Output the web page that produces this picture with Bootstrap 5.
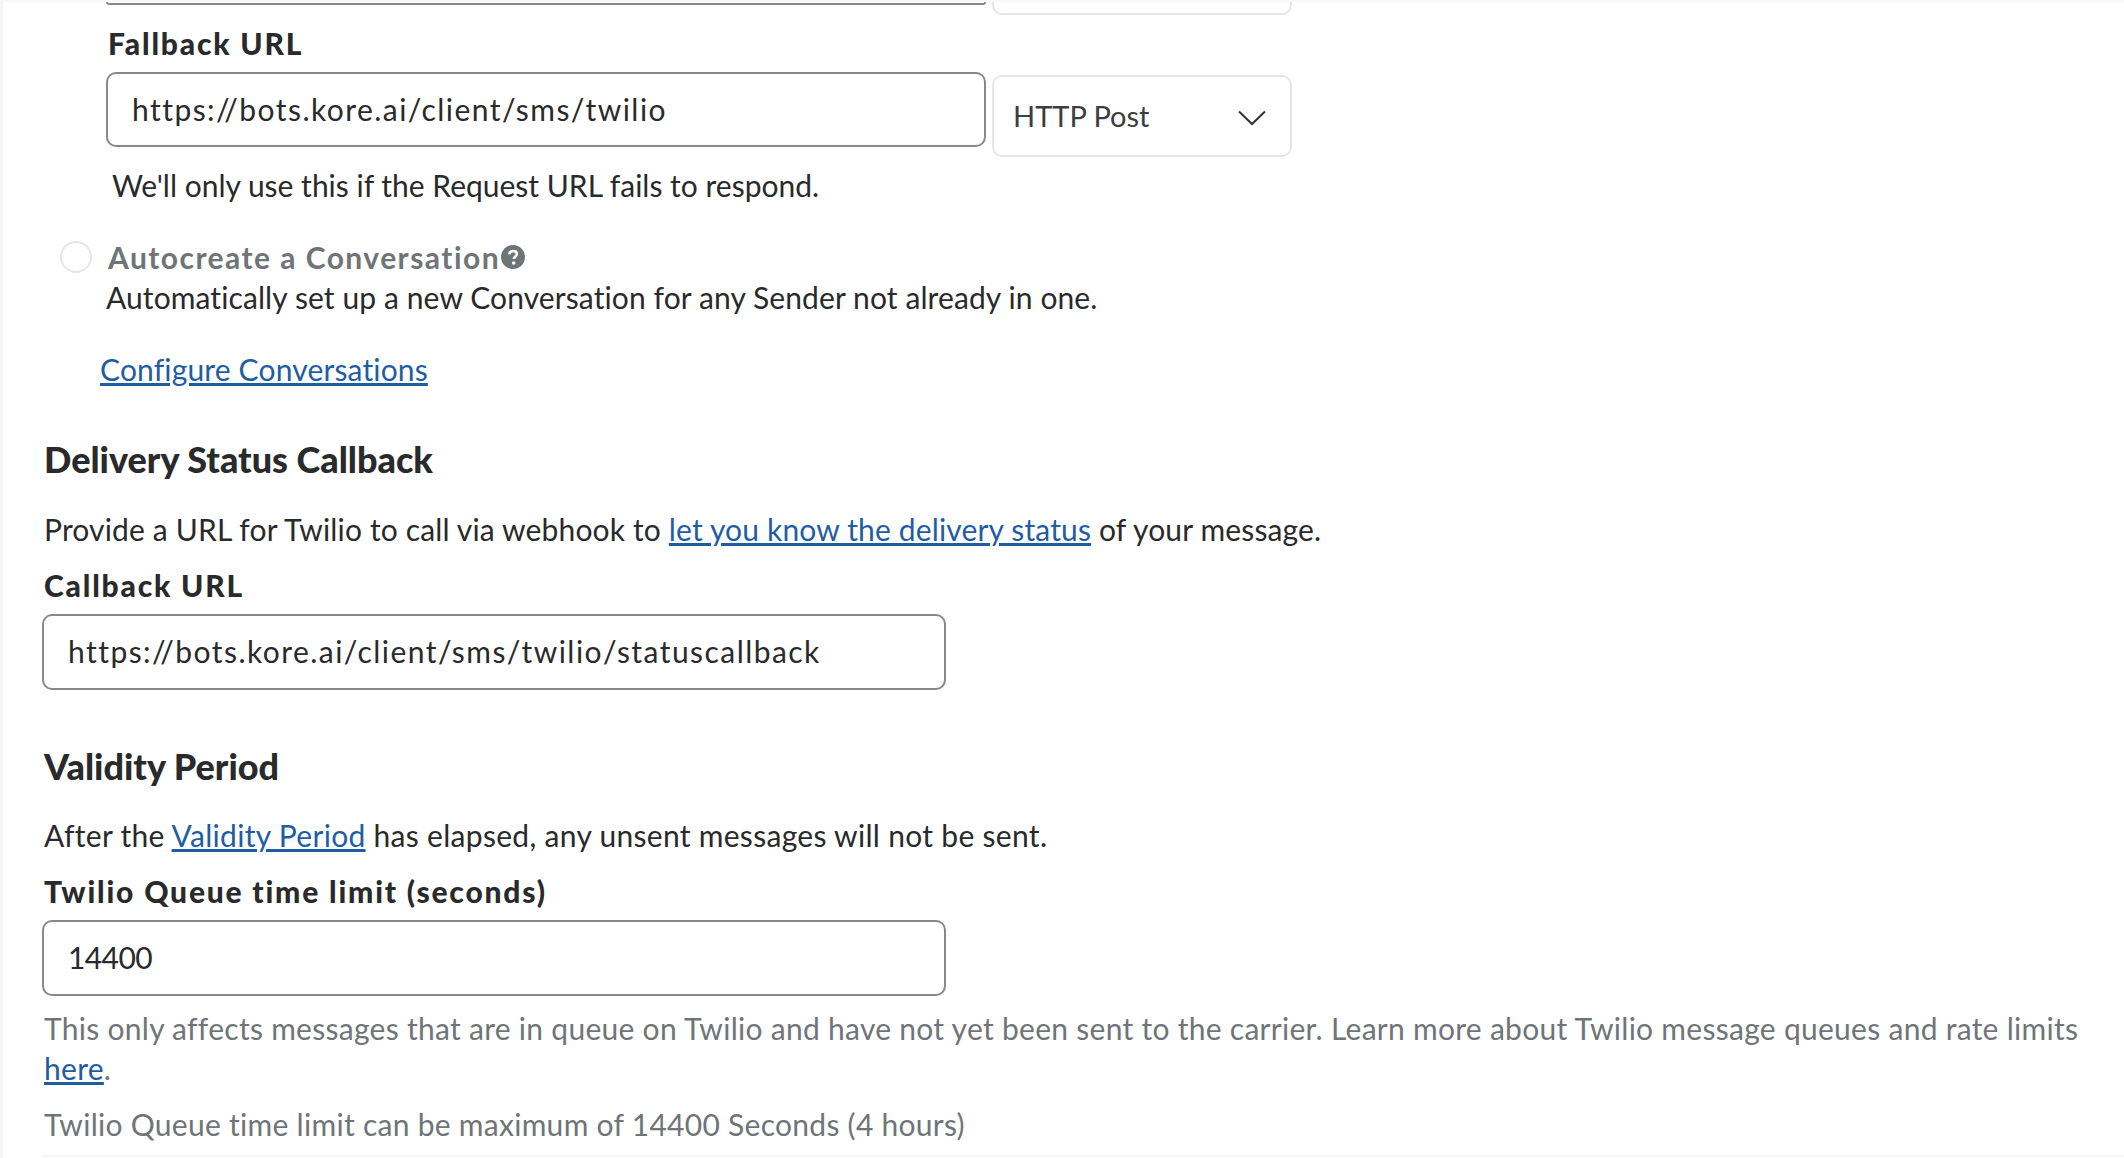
<!DOCTYPE html>
<html lang="en">
<head>
<meta charset="utf-8">
<title>Twilio messaging settings</title>
<link rel="stylesheet" href="https://cdn.jsdelivr.net/npm/bootstrap@5.3.0/dist/css/bootstrap.min.css">
<style>
html,body{height:100%;overflow:hidden}
body{font-family:Lato,"Open Sans",sans-serif;font-size:30px;line-height:40px;color:#282a2b;background:#fff;letter-spacing:.15px}
.page-edge{border-left:3px solid #f5f5f5;border-top:2px solid #f8f8f8;height:1158px;padding-left:39px;overflow:hidden}
.sub-block{padding-left:64px}
.stub-row{height:13px;gap:6px}
.stub-input{width:880px;height:3px;border:2px solid #868a8d;border-top:0;border-radius:0 0 10px 10px}
.stub-select{width:300px;height:13px;border:2px solid #e6e6e6;border-top:0;border-radius:0 0 10px 10px}
.url-box{height:76px;border:2px solid #868a8d;border-radius:10px;padding:0 24px 2px;font-size:30px;color:#282a2b;box-shadow:none;background:#fff;letter-spacing:1.45px}
.url-box.wide{width:880px;height:75px}
.url-box.mid{width:904px;margin-top:9px}
.url-box.num-val{letter-spacing:-.6px}
.field-row{gap:6px;margin-top:9px}
.verb-box{width:300px;height:82px;margin-top:3px;border:2px solid #e6e6e6;border-radius:10px;padding:0 24px 0 19px;color:#3b3d3e;font-size:29px;letter-spacing:0}
.verb-arrow{margin-top:4px}
.field-name{font-weight:900;font-size:30px;line-height:40px;margin:0;letter-spacing:1.8px;padding-left:2px}
.field-first{margin-top:8px}
.sect-name{font-weight:900;font-size:36px;line-height:44px;margin:0;letter-spacing:0;padding-left:2px}
.tw-link{color:#1f5da3}
.muted-note{color:#6f7478;letter-spacing:.28px;padding-left:2px}
.check-ring{width:32px;height:32px;border:2px solid #e6e6e6;border-radius:50%;background:#fff;flex:none}
.auto-row{margin-top:32px;padding-left:18px}
.auto-label{font-weight:700;color:#6f7478;letter-spacing:1.45px}
.auto-desc{padding-left:64px;letter-spacing:.1px}
.conf-row{padding-left:58px;margin-top:32px!important}
.help-a{margin-top:8px!important;letter-spacing:0;padding-left:6px}
.delivery{margin-top:48px}
.validity{margin-top:54px}
.sect-text{margin-top:28px!important;padding-left:2px}
.sect-text.after-line{margin-top:27px!important;letter-spacing:.3px}
.label-gap{margin-top:16px}
.note-a{margin-top:12px!important}
.note-b{margin-top:16px!important}
.bottom-rule{border-top:2px solid #f5f5f5;margin-top:11px}
.q-icon{margin-left:-15px}
</style>
</head>
<body>
<main class="page-edge">
  <div class="sub-block">
    <div class="d-flex stub-row"><div class="stub-input"></div><div class="stub-select"></div></div>
    <label class="field-name field-first d-block">Fallback URL</label>
    <div class="d-flex align-items-start field-row">
      <input class="form-control url-box wide" type="text" value="https://bots.kore.ai/client/sms/twilio" aria-label="Fallback URL">
      <div class="verb-box d-flex justify-content-between align-items-center">
        <span>HTTP Post</span>
        <svg class="verb-arrow" width="28" height="16" viewBox="0 0 28 16" fill="none" stroke="#333" stroke-width="2"><path d="M1 1.5l13 12.5L27 1.5"/></svg>
      </div>
    </div>
    <p class="m-0 help-a">We'll only use this if the Request URL fails to respond.</p>
  </div>
  <div class="d-flex align-items-center gap-3 auto-row">
    <span class="check-ring"></span>
    <span class="auto-label">Autocreate a Conversation</span>
    <svg class="q-icon" width="24" height="24" viewBox="0 0 24 24" aria-hidden="true"><circle cx="12" cy="12" r="12" fill="#6f7478"/><path d="M8.3 9.4c.2-2.2 1.8-3.4 3.9-3.4s3.7 1.2 3.7 3.1c0 2.6-3.1 2.6-3.1 4.9" fill="none" stroke="#fff" stroke-width="2.6"/><circle cx="12.7" cy="18" r="1.8" fill="#fff"/></svg>
  </div>
  <p class="m-0 auto-desc">Automatically set up a new Conversation for any Sender not already in one.</p>
  <p class="m-0 conf-row"><a class="tw-link" href="#">Configure Conversations</a></p>

  <h2 class="sect-name delivery">Delivery Status Callback</h2>
  <p class="m-0 sect-text">Provide a URL for Twilio to call via webhook to <a class="tw-link" href="#">let you know the delivery status</a> of your message.</p>
  <label class="field-name d-block label-gap">Callback URL</label>
  <input class="form-control url-box mid" type="text" value="https://bots.kore.ai/client/sms/twilio/statuscallback" aria-label="Callback URL">

  <h2 class="sect-name validity">Validity Period</h2>
  <p class="m-0 sect-text after-line">After the <a class="tw-link" href="#">Validity Period</a> has elapsed, any unsent messages will not be sent.</p>
  <label class="field-name d-block label-gap">Twilio Queue time limit (seconds)</label>
  <input class="form-control url-box num-val mid" type="text" value="14400" aria-label="Twilio Queue time limit">
  <p class="m-0 muted-note note-a">This only affects messages that are in queue on Twilio and have not yet been sent to the carrier. Learn more about Twilio message queues and rate limits <a class="tw-link" href="#">here</a>.</p>
  <p class="m-0 muted-note note-b">Twilio Queue time limit can be maximum of 14400 Seconds (4 hours)</p>
  <div class="bottom-rule"></div>
</main>
<script src="https://cdn.jsdelivr.net/npm/bootstrap@5.3.0/dist/js/bootstrap.bundle.min.js"></script>
</body>
</html>
